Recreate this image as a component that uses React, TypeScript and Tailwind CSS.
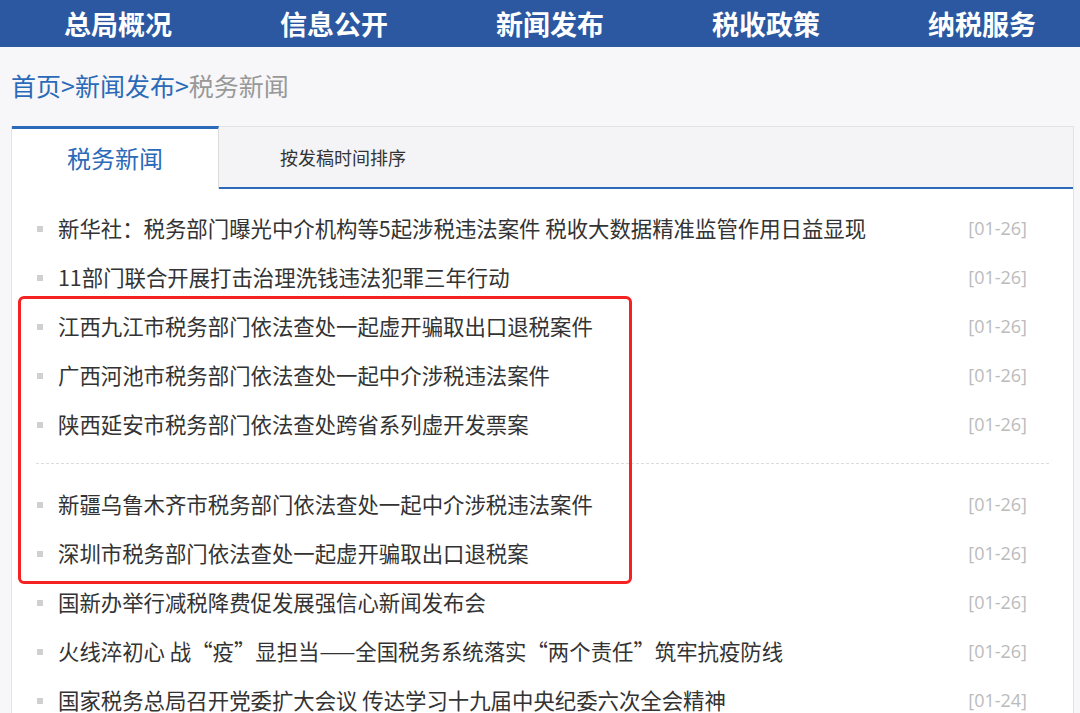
const NAV = ['总局概况', '信息公开', '新闻发布', '税收政策', '纳税服务']

const GROUP_A = [
  '新华社：税务部门曝光中介机构等5起涉税违法案件 税收大数据精准监管作用日益显现',
  '11部门联合开展打击治理洗钱违法犯罪三年行动',
  '江西九江市税务部门依法查处一起虚开骗取出口退税案件',
  '广西河池市税务部门依法查处一起中介涉税违法案件',
  '陕西延安市税务部门依法查处跨省系列虚开发票案',
]

const GROUP_B = [
  { title: '新疆乌鲁木齐市税务部门依法查处一起中介涉税违法案件', date: '01-26' },
  { title: '深圳市税务部门依法查处一起虚开骗取出口退税案', date: '01-26' },
  { title: '国新办举行减税降费促发展强信心新闻发布会', date: '01-26' },
  { title: '火线淬初心 战“疫”显担当——全国税务系统落实“两个责任”筑牢抗疫防线', date: '01-26' },
  { title: '国家税务总局召开党委扩大会议 传达学习十九届中央纪委六次全会精神', date: '01-24' },
]

function Row({ title, date }: { title: string; date: string }) {
  return (
    <li className="flex items-center h-[49px]">
      <span className="w-[6px] h-[6px] bg-[#d0d0d0] shrink-0 ml-[1px]" />
      <span className="ml-[15px] flex-1 whitespace-nowrap text-[21.4px] text-[#333] leading-normal">{title}</span>
      <span className="text-[18px] text-[#bbb] leading-normal font-['Open_Sans',sans-serif]">[{date}]</span>
    </li>
  )
}

export default function App() {
  return (
    <div
      className="relative w-[1080px] h-[713px] overflow-hidden bg-[#f7f6f8]"
      style={{ fontFamily: '"Noto Sans CJK SC", "Noto Sans", sans-serif' }}
    >
      {/* ── Top nav ─────────────────────────────── */}
      <div className="h-[47px] bg-[#2b58a1] flex pl-[10px]">
        {NAV.map(n => (
          <div key={n} className="w-[216px] shrink-0 flex items-center justify-center text-white font-bold text-[27px] leading-none">
            {n}
          </div>
        ))}
      </div>

      {/* ── Breadcrumb ──────────────────────────── */}
      <div className="h-[79px] flex items-center pl-[11px] text-[25px] leading-normal pb-[2px]">
        <span className="text-[#2a6ab8]">首页&gt;新闻发布&gt;</span>
        <span className="text-[#999]">税务新闻</span>
      </div>

      {/* ── Panel ───────────────────────────────── */}
      <div className="ml-[11px] w-[1063px] h-[600px] border-l border-r border-t border-[#e2e2e4] bg-white">
        <div className="flex h-[62px] bg-[#f4f3f6]">
          <div className="w-[207px] h-[63px] bg-white border-t-[3px] border-[#2a6ab8] border-r border-r-[#dcdcdc] flex items-center justify-center text-[24px] text-[#2a6ab8] leading-normal pb-[2px] relative z-10 -mt-[1px]">
            税务新闻
          </div>
          <div className="flex-1 border-b-2 border-[#2a6ab8] flex items-center">
            <span className="ml-[61px] text-[18px] text-[#333] leading-normal">按发稿时间排序</span>
          </div>
        </div>

        <div className="pl-[24px] pr-[46px] pt-[15px]">
          <ul>
            {GROUP_A.map(t => (
              <Row key={t} title={t} date="01-26" />
            ))}
          </ul>
          <div className="mt-[14px] mb-[16px] border-t border-dashed border-[#dcdcdc] mr-[-22px]" />
          <ul>
            {GROUP_B.map(r => (
              <Row key={r.title} title={r.title} date={r.date} />
            ))}
          </ul>
        </div>
      </div>

      {/* ── Annotation box ──────────────────────── */}
      <div className="absolute left-[18px] top-[296px] w-[614px] h-[288px] border-[3px] border-[#f52222] rounded-[6px] pointer-events-none" />
    </div>
  )
}
